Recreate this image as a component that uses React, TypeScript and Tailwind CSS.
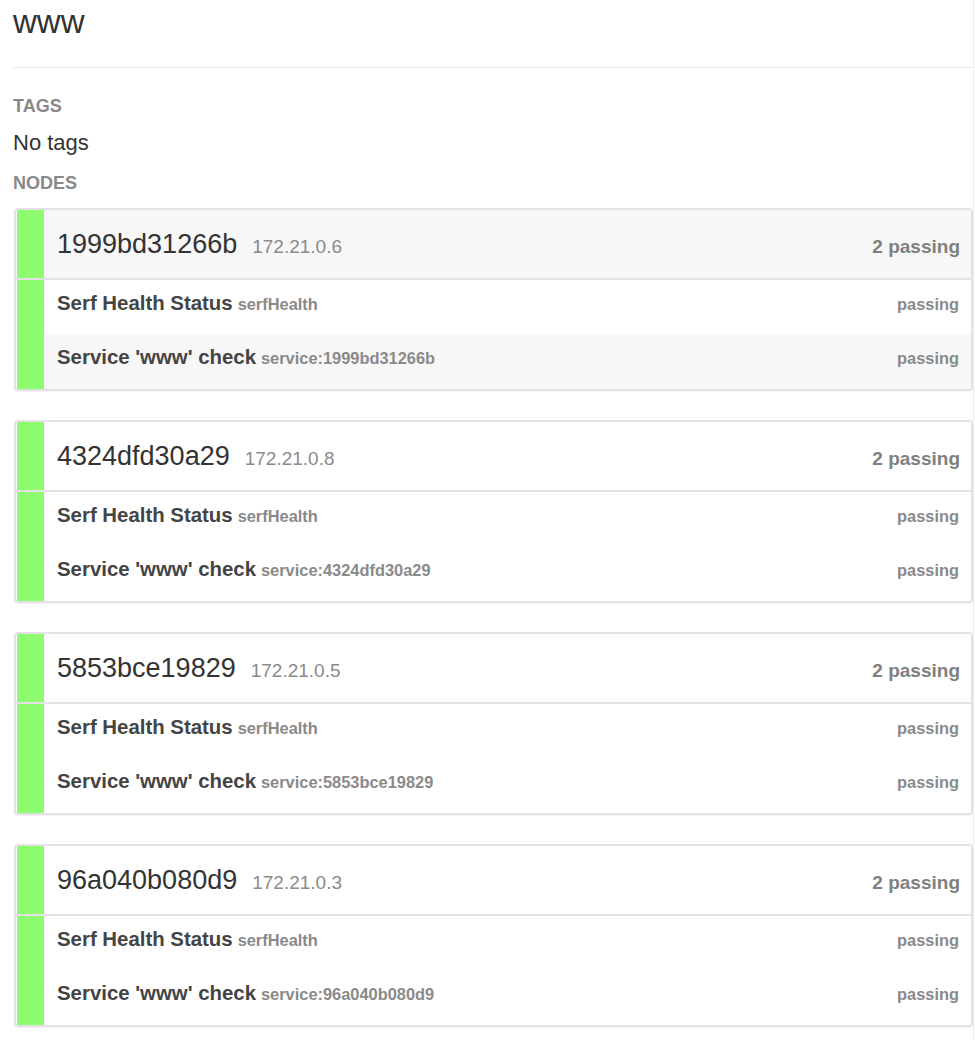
type Check = { name: string; id: string; status: string };
type Node = { host: string; ip: string; checks: Check[]; active?: boolean };

const nodes: Node[] = [
  {
    host: "1999bd31266b",
    ip: "172.21.0.6",
    active: true,
    checks: [
      { name: "Serf Health Status", id: "serfHealth", status: "passing" },
      { name: "Service 'www' check", id: "service:1999bd31266b", status: "passing" },
    ],
  },
  {
    host: "4324dfd30a29",
    ip: "172.21.0.8",
    checks: [
      { name: "Serf Health Status", id: "serfHealth", status: "passing" },
      { name: "Service 'www' check", id: "service:4324dfd30a29", status: "passing" },
    ],
  },
  {
    host: "5853bce19829",
    ip: "172.21.0.5",
    checks: [
      { name: "Serf Health Status", id: "serfHealth", status: "passing" },
      { name: "Service 'www' check", id: "service:5853bce19829", status: "passing" },
    ],
  },
  {
    host: "96a040b080d9",
    ip: "172.21.0.3",
    checks: [
      { name: "Serf Health Status", id: "serfHealth", status: "passing" },
      { name: "Service 'www' check", id: "service:96a040b080d9", status: "passing" },
    ],
  },
];

function NodePanel({ node }: { node: Node }) {
  return (
    <div className="border-2 border-[#e3e3e3] rounded-[4px] shadow-[0_1px_1px_rgba(0,0,0,0.05)] overflow-hidden">
      <div className={`flex h-[68px] ${node.active ? "bg-[#f7f7f7]" : "bg-white"}`}>
        <div className="w-[27px] ml-px bg-[#8dfc6f]" />
        <div className="flex flex-1 items-center pl-[13px] pr-[11px]">
          <div className="flex flex-1 items-baseline">
            <span className="text-[27px] leading-none text-[#333]">{node.host}</span>
            <span className="ml-[15px] text-[19px] leading-none text-[#8a8a8a]">{node.ip}</span>
            <span className="ml-auto text-[19px] leading-none font-bold text-[#808080]">
              {node.checks.length} passing
            </span>
          </div>
        </div>
      </div>
      <div className="h-[2px] bg-[#e3e3e3]" />
      <div className="flex">
        <div className="w-[27px] ml-px bg-[#8dfc6f]" />
        <div className="flex-1">
          {node.checks.map((c, i) => (
            <div
              key={c.id}
              className={`flex items-baseline pt-[13px] pl-[13px] pr-[12px] ${
                i === node.checks.length - 1 ? "h-[55px]" : "h-[54px]"
              } ${node.active && i === 1 ? "bg-[#f7f7f7]" : "bg-white"}`}
            >
              <span className="text-[20.4px] leading-none font-bold text-[#444]">{c.name}</span>
              <span className="ml-[5px] text-[16.4px] leading-none font-bold text-[#8a8a8a]">{c.id}</span>
              <span className="ml-auto text-[16.4px] leading-none font-bold text-[#8a8a8a]">{c.status}</span>
            </div>
          ))}
        </div>
      </div>
    </div>
  );
}

export default function App() {
  return (
    <div className="w-[975px] min-h-screen bg-white font-['Liberation_Sans',Arial,sans-serif]">
      <div className="w-[974px] min-h-screen border-r border-[#ececec] pl-[13px]">
        <h1 className="pt-[5px] text-[33px] leading-none font-normal text-[#333]">www</h1>
        <div className="mt-[29px] h-px bg-[#e7e7e7]" />
        <h4 className="mt-[29px] text-[18px] leading-none font-bold text-[#888]">TAGS</h4>
        <p className="mt-[17px] text-[22px] leading-none text-[#333]">No tags</p>
        <h4 className="mt-[20px] text-[18px] leading-none font-bold text-[#888]">NODES</h4>
        <div className="mt-[16px] ml-px flex flex-col gap-[29px]">
          {nodes.map((n) => (
            <NodePanel key={n.host} node={n} />
          ))}
        </div>
      </div>
    </div>
  );
}
